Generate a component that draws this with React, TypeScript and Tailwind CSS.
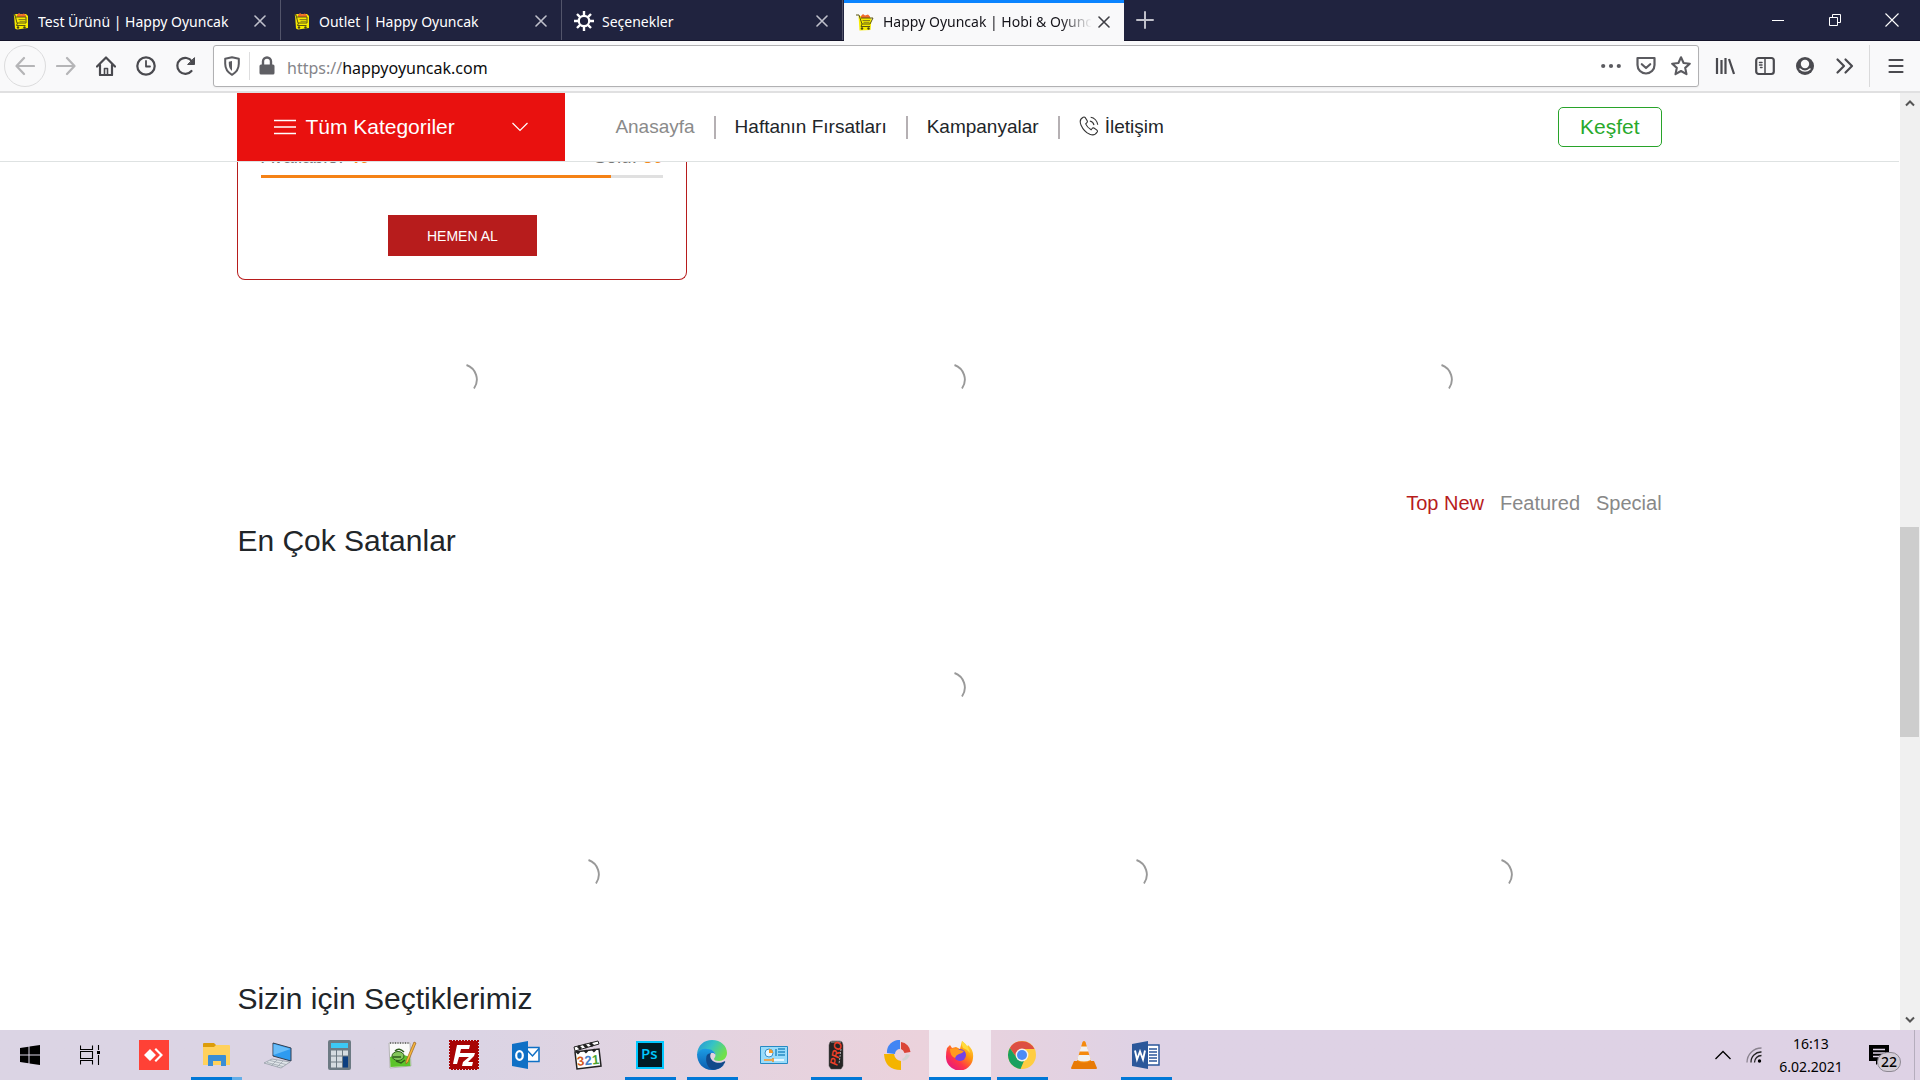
import React, { useState } from 'react';

const ui = "font-['Noto_Sans',sans-serif]";

function CartIcon({ flat = false }: { flat?: boolean }) {
  return (
    <svg viewBox="0 0 18 18" className="h-[18px] w-[18px] shrink-0">
      <path d={flat ? 'M2.500 3h10l3 3-1 11-11 .500z' : 'M2 3l2-1h10l2 2v12l-11 1.500-2-1z'} fill="#f7ec00" />
      <path d="M5 3l2-2 2 1.500 3-1 2 2v1.500H5z" fill="#ef6a2a" />
      <path d={flat ? 'M0 2h3l3 9h8l3-6H5M6 11l-1 2.500h9' : 'M1 3h2l2 8h9V5H4M5.500 11l-1 2.500h9'} fill="none" stroke="#5b5512" strokeWidth="1" />
      <path d="M6.500 7.500H14M7.500 9.300h6" fill="none" stroke="#7d751b" strokeWidth=".900" />
      <circle cx="6" cy="15.500" r="1.200" fill="#4a4515" />
      <circle cx="12.500" cy="15.500" r="1.200" fill="#4a4515" />
    </svg>
  );
}

function GearIcon() {
  return (
    <svg viewBox="0 0 20 20" className="h-5 w-5 shrink-0" fill="none" stroke="#fff">
      <circle cx="10" cy="10" r="5.200" strokeWidth="2.200" />
      <path d="M10 4.500V0M10 15.500V20M4.500 10H0M15.500 10H20M6.100 6.100L3 3M13.900 13.900L17 17M13.900 6.100L17 3M6.100 13.900L3 17" strokeWidth="2.400" />
    </svg>
  );
}

function Cross({ className }: { className: string }) {
  return (
    <svg viewBox="0 0 12 12" className={className} fill="none" stroke="currentColor" strokeWidth="1.600" strokeLinecap="round">
      <path d="M1 1l10 10M11 1L1 11" />
    </svg>
  );
}

const tabs = [
  { title: 'Test Ürünü | Happy Oyuncak', icon: <CartIcon /> },
  { title: 'Outlet | Happy Oyuncak', icon: <CartIcon /> },
  { title: 'Seçenekler', icon: <GearIcon /> },
  { title: 'Happy Oyuncak | Hobi & Oyuncak', icon: <CartIcon flat /> },
];

function TabBar() {
  return (
    <div className="flex h-[41px] shrink-0 border-b border-[#14142a] bg-[#20233f] text-white">
      {tabs.map((t, i) => {
        const active = i === 3;
        return (
          <div
            key={t.title}
            className={
              active
                ? '-mb-px ml-px flex w-[280px] items-center border-t-[3px] border-[#0a84ff] bg-[#f9f9fa] pr-3.5 pb-px pl-3'
                : 'flex w-[281px] items-center border-r border-[#52546a] pt-0.5 pr-3.5 pl-3'
            }
          >
            <button className={active ? 'flex min-w-0 flex-1 items-center gap-[9px] text-left text-[#15141a]' : 'flex min-w-0 flex-1 items-center gap-2 text-left'}>
              {t.icon}
              <span
                className={
                  active
                    ? 'flex-1 overflow-hidden mask-r-from-85% text-[14px] whitespace-nowrap'
                    : 'flex-1 overflow-hidden text-[14px] whitespace-nowrap'
                }
              >
                {t.title}
              </span>
            </button>
            <button aria-label="Sekmeyi kapat" className={active ? 'ml-1.5 text-[#3f3f45]' : 'ml-2 text-[#bfc0cb]'}>
              <Cross className="h-3 w-3" />
            </button>
          </div>
        );
      })}
      <button aria-label="Yeni sekme" className="ml-3 flex items-center text-[#c0c0ca]">
        <svg viewBox="0 0 18 18" className="h-[18px] w-[18px]" fill="none" stroke="currentColor" strokeWidth="2" strokeLinecap="round">
          <path d="M9 1v16M1 9h16" />
        </svg>
      </button>
      <div className="ml-auto flex">
        <button aria-label="Simge durumuna küçült" className="flex w-[57px] items-center justify-center">
          <span className="h-px w-3 bg-white" />
        </button>
        <button aria-label="Önceki boyut" className="flex w-[57px] items-center justify-center">
          <svg viewBox="0 0 12 12" className="h-3 w-3" fill="none" stroke="#fff">
            <path d="M.500 3.500h8v8h-8zM3.500 3.500v-3h8v8h-3" />
          </svg>
        </button>
        <button aria-label="Kapat" className="flex w-[57px] items-center justify-center">
          <svg viewBox="0 0 14 14" className="h-3.5 w-3.5" fill="none" stroke="#fff" strokeWidth="1.100">
            <path d="M.500.500l13 13M13.500.500l-13 13" />
          </svg>
        </button>
      </div>
    </div>
  );
}

function NavIcon({ label, children, className = '' }: { label: string; children: React.ReactNode; className?: string }) {
  return (
    <button aria-label={label} className={`flex h-10 w-10 shrink-0 items-center justify-center ${className}`}>
      <svg viewBox="0 0 20 20" className="h-5 w-5" fill="none" stroke="currentColor" strokeWidth="2.200" strokeLinecap="round" strokeLinejoin="round">
        {children}
      </svg>
    </button>
  );
}

function Toolbar() {
  const [url, setUrl] = useState('happyoyuncak.com');
  return (
    <div className="flex h-[52px] shrink-0 items-center border-b-2 border-[#e0e0e1] bg-[#f9f9fa] text-[#4a4a4f]">
      <button aria-label="Geri" className="ml-1 flex h-[42px] w-[42px] shrink-0 items-center justify-center rounded-full border border-[#dcdcdd] text-[#b5b5b7]">
        <svg viewBox="0 0 20 20" className="h-5 w-5" fill="none" stroke="currentColor" strokeWidth="2.200" strokeLinecap="round" strokeLinejoin="round">
          <path d="M19 10H2M9 2L1.500 10 9 18" />
        </svg>
      </button>
      <NavIcon label="İleri" className="text-[#b5b5b7]">
        <path d="M1 10h17M11 2l7.500 8L11 18" />
      </NavIcon>
      <NavIcon label="Ana sayfa">
        <path d="M1 10.500L10 1.500l9 9M4 9v10h12V9" />
        <path d="M8.500 18.500v-6h3v6" strokeWidth="1.600" />
      </NavIcon>
      <NavIcon label="Geçmiş">
        <circle cx="10" cy="10" r="8.700" />
        <path d="M10 5v5.500h4" strokeWidth="1.800" />
      </NavIcon>
      <NavIcon label="Yenile">
        <path d="M15.500 15A8 8 0 1 1 16 5.500" />
        <path d="M18.500 2v6.500H12z" fill="currentColor" strokeWidth="1" />
      </NavIcon>
      <div className="ml-[7px] flex h-[42px] min-w-0 flex-1 items-center rounded-[3px] border border-[#b1b1b3] bg-white shadow-xs">
        <button aria-label="İzleme koruması" className="flex w-9 justify-center border-r border-[#dededf] py-1">
          <svg viewBox="0 0 18 20" className="h-5 w-[18px]" fill="none" stroke="#5b5b60" strokeWidth="2">
            <path d="M9 1.200l6.800 1.600v5c0 5-2.300 8.500-6.800 11-4.500-2.500-6.800-6-6.800-11v-5z" strokeLinejoin="round" />
            <path d="M9 5v10c-2-1.700-3.200-4-3.200-7V5.700z" fill="#5b5b60" stroke="none" />
          </svg>
        </button>
        <button aria-label="Site bilgileri" className="ml-[9px]">
          <svg viewBox="0 0 16 20" className="h-5 w-4" fill="none">
            <path d="M4 9V5.500a4 4 0 0 1 8 0V9" stroke="#5f5f64" strokeWidth="2.400" />
            <rect x=".500" y="8.500" width="15" height="10" rx="1.500" fill="#5f5f64" />
          </svg>
        </button>
        <label className={`${ui} ml-3 flex min-w-0 flex-1 items-center pt-[3px] text-base text-[#0c0c0d]`}>
          <span className="text-[#85858a]">https://</span>
          <input aria-label="Adres" value={url} onChange={(e) => setUrl(e.target.value)} className="min-w-0 flex-1 bg-transparent outline-none" />
        </label>
        <div className="flex gap-[15px] pr-[7px] text-[#5b5b60]">
          <button aria-label="Sayfa eylemleri">
            <svg viewBox="0 0 20 20" className="h-5 w-5" fill="currentColor">
              <circle cx="2.200" cy="10" r="2.100" /><circle cx="10" cy="10" r="2.100" /><circle cx="17.800" cy="10" r="2.100" />
            </svg>
          </button>
          <button aria-label="Pocket'a kaydet">
            <svg viewBox="0 0 20 20" className="h-5 w-5" fill="none" stroke="currentColor" strokeWidth="2.200" strokeLinecap="round" strokeLinejoin="round">
              <path d="M1.500 2h17v7a8.500 8.500 0 0 1-17 0z" />
              <path d="M5.800 8.200L10 12l4.200-3.800" />
            </svg>
          </button>
          <button aria-label="Yer imlerine ekle">
            <svg viewBox="0 0 20 20" className="h-5 w-5" fill="none" stroke="currentColor" strokeWidth="2.100" strokeLinejoin="round">
              <path d="M10 1.300l2.600 5.700 6.200.700-4.600 4.200 1.300 6.300L10 15l-5.500 3.200 1.300-6.300L1.200 7.700 7.400 7z" />
            </svg>
          </button>
        </div>
      </div>
      <div className="ml-1.5 flex">
        <NavIcon label="Kütüphane">
          <path d="M2 2v16M6.500 4v14M10.500 2v16M14 3l5 15" strokeLinecap="butt" />
        </NavIcon>
        <NavIcon label="Kenar çubuğu">
          <rect x="1.200" y="2" width="17.600" height="16" rx="2.500" />
          <path d="M10 2v16M4.500 6.500h2.500M4.500 9h2.500M5.500 11.500H7" strokeWidth="1.500" />
        </NavIcon>
        <NavIcon label="Hesap">
          <circle cx="10" cy="10" r="9" fill="currentColor" stroke="none" />
          <circle cx="10" cy="8" r="4.200" fill="#f9f9fa" stroke="none" />
          <path d="M5 13c3 2.700 7 2.700 10 0" stroke="#f9f9fa" strokeWidth="1.500" />
        </NavIcon>
        <NavIcon label="Diğer araçlar">
          <path d="M2.500 3.500L9 10l-6.500 6.500M10.500 3.500L17 10l-6.500 6.500" />
        </NavIcon>
      </div>
      <span className="ml-1 h-[42px] w-px bg-[#dadadb]" />
      <NavIcon label="Menü" className="mr-1 ml-1.5">
        <path d="M3.500 4h13M3.500 10h13M3.500 16h13" />
      </NavIcon>
    </div>
  );
}

function Spinner() {
  return (
    <svg role="img" aria-label="Yükleniyor" viewBox="0 0 32 32" className="h-8 w-8" fill="none" stroke="#999" strokeWidth="1.900">
      <path d="M20.500 1A15.500 15.500 0 0 1 28 24.500" />
    </svg>
  );
}

const Divider = () => <span className="mx-[19px] h-[23px] w-0.5 bg-[#b5b0b3]" />;

function SiteHeader() {
  return (
    <header className="h-[69px] shrink-0 border-b border-[#dee2e2] bg-white">
      <div className="mx-auto flex h-full w-3/4 items-center">
        <button className="flex h-full w-[328px] items-center bg-[#e9110f] px-9 text-[21px] text-white">
          <svg viewBox="0 0 24 20" className="mr-2 h-5 w-6" stroke="#fff" strokeWidth="1.400">
            <path d="M1 3.500h22M1 10h22M1 16.500h22" />
          </svg>
          Tüm Kategoriler
          <svg viewBox="0 0 18 18" className="ml-auto h-[18px] w-[18px]" fill="none" stroke="#fff" strokeWidth="1.200">
            <path d="M1.500 5L9 12.500 16.500 5" />
          </svg>
        </button>
        <nav className="ml-[50px] flex items-center pt-px text-[19px] text-[#212529]">
          <a href="#anasayfa" className="text-[#8a8a8a]">Anasayfa</a>
          <Divider />
          <a href="#firsatlar">Haftanın Fırsatları</a>
          <Divider />
          <a href="#kampanyalar">Kampanyalar</a>
          <Divider />
          <a href="#iletisim" className="flex items-center gap-1.5">
            <svg viewBox="0 0 24 24" className="mb-1 h-5 w-5" fill="none" stroke="#333" strokeWidth="1.300">
              <path d="M5 1.500c-4 2-4.500 5-2.500 9.500 2.500 5.500 6 9 10.500 11 4 1.500 7 .500 9-3 .500-1 0-1.500-.500-2l-3.500-2.500c-1-.500-1.700-.300-2.300.500l-1.200 1.500C11 14.500 9 12 8 9.500l1.500-1.500c.700-.700.800-1.300.300-2.300L7.500 2c-.700-1-1.500-1-2.500-.500z" />
              <path d="M13 6c2.500.500 4.500 2.500 5 5M14 1.500c4.500.500 8 4.500 8.500 9" />
            </svg>
            İletişim
          </a>
        </nav>
        <button className="ml-auto h-10 rounded-[5px] border border-[#28a32a] px-[21px] text-[21px] text-[#28a92b]">Keşfet</button>
      </div>
    </header>
  );
}

function Page() {
  return (
    <div className="min-w-0 flex-1 overflow-hidden font-['Liberation_Sans',Arial,sans-serif] text-[#212529]">
      <SiteHeader />
      <main className="mx-auto w-3/4">
        <section className="w-[450px] overflow-hidden rounded-b-lg border border-t-0 border-[#b71c1c] px-[23px] pb-[23px]">
          <div className="-mt-[17px] flex justify-between text-[19px] leading-6 text-[#777]">
            <span>Available: <b className="text-[#f58a1c]">40</b></span>
            <span>Sold: <b className="text-[#f58a1c]">60</b></span>
          </div>
          <div className="mt-1.5 h-[3px] bg-[#e0e0e0]">
            <div className="h-full w-[87%] bg-[#f58216]" />
          </div>
          <button className="mx-auto mt-[37px] block h-[41px] w-[149px] bg-[#b71c1c] pt-px text-[14px] text-white">HEMEN AL</button>
        </section>
        <section className="mt-[84px] grid grid-cols-3 justify-items-center gap-x-[39px]">
          <Spinner />
          <Spinner />
          <Spinner />
        </section>
        <section className="mt-[93px]">
          <div className="flex justify-end gap-4 text-xl leading-7 text-[#888]">
            <button className="text-[#b71c1c]">Top New</button>
            <button>Featured</button>
            <button>Special</button>
          </div>
          <h2 className="mt-1 text-[30px] leading-10">En Çok Satanlar</h2>
          <div className="mt-[111px] flex justify-center">
            <Spinner />
          </div>
          <div className="-mx-[18px] mt-[155px] grid grid-cols-4 justify-items-center">
            <div className="col-span-2"><Spinner /></div>
            <Spinner />
            <Spinner />
          </div>
        </section>
        <section className="mt-[88px]">
          <h2 className="text-[30px] leading-10">Sizin için Seçtiklerimiz</h2>
        </section>
      </main>
    </div>
  );
}

function Scrollbar() {
  return (
    <div className="flex w-[21px] shrink-0 flex-col items-center border-l border-white bg-[#f0f0f0] pr-px">
      <svg viewBox="0 0 10 8" className="mt-1.5 h-2 w-2.5" fill="none" stroke="#555" strokeWidth="2"><path d="M1 6.500l4-4 4 4" /></svg>
      <div className="grow-[420]" />
      <div className="w-full grow-[210] bg-[#cdcdcd]" />
      <div className="grow-[279]" />
      <svg viewBox="0 0 10 8" className="mb-1.5 h-2 w-2.5" fill="none" stroke="#555" strokeWidth="2"><path d="M1 1.500l4 4 4-4" /></svg>
    </div>
  );
}

const box = 'h-[30px] w-[30px]';

const AnyDesk = () => (
  <svg viewBox="0 0 30 30" className={box}>
    <path d="M0 0h30v30H0z" fill="#ff4136" />
    <path d="M11 9l6 6-6 6-6-6zM15.500 9.500L17 8l7 7-7 7-1.500-1.500L21 15z" fill="#fff" />
  </svg>
);
const Explorer = () => (
  <svg viewBox="0 0 30 30" className={box}>
    <path d="M2 4q0-1 1-1h10l2 2v4H2z" fill="#dc9c0a" />
    <path d="M2 7h11l2-2h13q1 0 1 1v19H2z" fill="#ffd15c" />
    <path d="M7 26V16q0-1 1-1h16q1 0 1 1v10h-5v-5h-8v5z" fill="#3a8ed6" />
  </svg>
);
const Remote = () => (
  <svg viewBox="0 0 30 30" className={box}>
    <path d="M10 3l18 5v13L10 16z" fill="#2e9bf0" stroke="#333f50" />
    <path d="M10.500 4l17 5-17 6z" fill="#68bdf9" />
    <path d="M1 23l8-4 18 3-9 6z" fill="#dfe4e8" stroke="#8b949d" strokeWidth=".700" />
    <path d="M4 22.500l16 4M7 20.500l16 4M8 26l6-6M14 27l6-6" stroke="#9da6ae" strokeWidth=".800" />
  </svg>
);
const Calculator = () => (
  <svg viewBox="0 0 30 30" className={box}>
    <rect x="3" width="23" height="30" rx="2" fill="#6c7a83" />
    <path d="M6 3h17v5H6z" fill="#3cc8f4" />
    <path d="M6 10.500h5v5H6zM12 10.500h5v5h-5zM18 10.500h5v5h-5zM6 16.500h5v5H6zM12 16.500h5v5h-5zM6 22.500h5v5H6zM12 22.500h5v5h-5z" fill="#d5dce0" />
    <path d="M18 16.500h5v11h-5z" fill="#0c3f80" />
  </svg>
);
const NotepadPP = () => (
  <svg viewBox="0 0 30 30" className={box}>
    <path d="M2 3h21l1 23-21 2z" fill="#fafafa" stroke="#b5b5b5" />
    <path d="M3 17q9-5 20 0l.500 9-20 1z" fill="#5cc42a" />
    <path d="M3 3h20" stroke="#777" strokeWidth="2" strokeDasharray="1 1.500" />
    <ellipse cx="11" cy="16" rx="6" ry="4.500" fill="#83c55b" stroke="#2d5c1b" />
    <path d="M8 11q4-4 9 1M9 21l5 2 4-3M6 17h8" fill="none" stroke="#2d5c1b" strokeWidth="1.500" />
    <path d="M27 2l2 1-8 19-2 2v-3z" fill="#f7b63b" stroke="#9a6320" strokeWidth=".700" />
  </svg>
);
const FileZilla = () => (
  <svg viewBox="0 0 30 30" className={box}>
    <path d="M1 1h28v28H1z" fill="#a80404" stroke="#a80404" strokeWidth="2" strokeDasharray="2 1" />
    <path d="M8 5h13l-1 4h-8l-1 4h7l-1 4h-7l-2 7H4z" fill="#fff" />
    <path d="M16 13h10l-1 3-6 6h5l-1 4H13l1-4 6-5h-5z" fill="#fff" />
  </svg>
);
const Outlook = () => (
  <svg viewBox="0 0 30 30" className={box}>
    <path d="M15 7.500h13v14H15z" fill="#fff" stroke="#0f70c5" strokeWidth="1.500" />
    <path d="M15 9l6.500 7L28 8.500" fill="none" stroke="#0f70c5" strokeWidth="1.500" />
    <path d="M1 4l16-3v28L1 26z" fill="#0f70c5" />
    <ellipse cx="8.500" cy="15.500" rx="3.300" ry="4.300" fill="none" stroke="#fff" strokeWidth="2.200" />
  </svg>
);
const MediaPlayer = () => (
  <svg viewBox="0 0 30 30" className={box}>
    <path d="M2 12l24-3 2 17-24 3z" fill="#fff" stroke="#222" strokeWidth="1.500" />
    <path d="M1 7L25 1l1 3-24 7z" fill="#fff" stroke="#222" />
    <path d="M5 6l3 3M11 4.500l3 3M17 3l3 3M4 11.500l2 2M12 10.500l2 2M20 9.500l2 2" stroke="#222" strokeWidth="3" />
    <g fontFamily="Liberation Sans" fontSize="13" fontWeight="700" transform="rotate(-6 15 20)">
      <text x="4" y="25" fill="#d3591d">3</text><text x="11.500" y="25" fill="#4381c9">2</text><text x="19" y="25" fill="#4aa52e">1</text>
    </g>
  </svg>
);
const Photoshop = () => (
  <svg viewBox="0 0 30 30" className={box}>
    <path d="M2 2h26v26H2z" fill="#001d26" stroke="#00c8ff" strokeWidth="2" />
    <text x="6" y="19" fontFamily="Open Sans" fontSize="15" fontWeight="600" fill="#00c8ff">Ps</text>
  </svg>
);
const Edge = () => (
  <svg viewBox="0 0 30 30" className={box}>
    <defs>
      <linearGradient id="edgeTop" x1="0" y1="0" x2="1" y2=".500">
        <stop offset="0" stopColor="#2591d8" /><stop offset=".500" stopColor="#36c3c5" /><stop offset="1" stopColor="#70e04a" />
      </linearGradient>
      <linearGradient id="edgeLow" x1="0" y1="0" x2="0" y2="1">
        <stop offset="0" stopColor="#1c9ce4" /><stop offset="1" stopColor="#0b5cae" />
      </linearGradient>
    </defs>
    <path d="M0 14C1 5 7 0 15 0c9 0 15 6 15 13 0 5-4 8-8 8-3 0-5-1-5-2s1.500-1.500 1.500-4c0-3-3-5-7-5C6 9 2 11 0 14z" fill="url(#edgeTop)" />
    <path d="M0 14c2-4 6-6 10-5 5 0 8.500 3 8.500 6-1-2-3-2.500-5-1.500-3 2-3 8 3 12 4 2 7 1 10.500-1-3 4-7 5.500-12 5.500C6 30 0 23 0 14z" fill="url(#edgeLow)" />
    <path d="M9.500 16c1-2 2.500-3 4.500-2.700-2 3 0 8 5 9.200 3 .700 6 .200 8-1 1-.500 1.500 0 1 1-3 5-7 7-12 7-5-1-8-7-6.500-13.500z" fill="#114a8b" />
  </svg>
);
const ControlPanel = () => (
  <svg viewBox="0 0 30 30" className={box}>
    <path d="M1.500 6.500h27v17h-27z" fill="#9bdcfa" stroke="#278ac4" />
    <circle cx="10" cy="13" r="4" fill="#e8f7ff" stroke="#388fca" />
    <path d="M10 13V9a4 4 0 0 1 4 4z" fill="#f39a2b" />
    <path d="M19 9h7M19 12h7M19 15h7M17 9v7" stroke="#278ac4" strokeWidth="1.500" />
    <path d="M5 20h20" stroke="#fff" strokeWidth="1.500" /><path d="M5 20h8M14 18v4" stroke="#eb8c1c" strokeWidth="1.500" />
  </svg>
);
const ProCan = () => (
  <svg viewBox="0 0 30 30" className={box}>
    <path d="M9 2l2-1h8l2 1 1 3v21l-2 3H10l-2-3V5z" fill="#252525" stroke="#555" strokeWidth=".500" />
    <path d="M10 2h10" stroke="#aaa" />
    <text fontFamily="Liberation Sans" fontSize="11" fontWeight="700" fontStyle="italic" fill="#f04028" transform="translate(16 26) rotate(-78)">PRO</text>
    <path d="M20 9l-2 15" stroke="#a9a9a9" strokeDasharray="2 1" />
  </svg>
);
const Ring = () => (
  <svg viewBox="0 0 30 30" className={box} fill="none">
    <path d="M4 13A12 12 0 0 1 17 0v9a5 5 0 0 0-5 5z" fill="#4285f4" />
    <path d="M18 2a11 11 0 0 1 9.500 10l-6 1q-1-3-3.500-4z" fill="#db4437" />
    <path d="M1 14h10q1 6 7 7v9Q2 30 1 14z" fill="#f4b400" />
    <path d="M19 19q3-1 4-5l4 1q-2 5-7 6z" fill="#d2d2d2" />
  </svg>
);
const Firefox = () => (
  <svg viewBox="0 0 30 30" className={box}>
    <defs>
      <linearGradient id="fox" x1="1" y1="0" x2=".200" y2="1">
        <stop offset="0" stopColor="#fff44f" /><stop offset=".400" stopColor="#ff980e" /><stop offset=".700" stopColor="#ff3647" /><stop offset="1" stopColor="#e31587" />
      </linearGradient>
    </defs>
    <path d="M2 8l3-3 2 3 4-1 4 2 2-8q3 2 5 6l1-2q6 5 5 13A13.500 13.500 0 0 1 1 16q0-4 1-8z" fill="url(#fox)" />
    <circle cx="15" cy="15" r="6" fill="#7542e5" />
    <path d="M5 9q5-2 10 1l4 1q-2 3-5 3-3 1-4 4-5-2-5-9z" fill="#ff9a1f" />
    <path d="M17 1q7 5 8 12-3-4-7-5-2-3-1-7z" fill="#ffdb3c" />
  </svg>
);
const Chrome = () => (
  <svg viewBox="0 0 30 30" className={box}>
    <circle cx="15" cy="15" r="14" fill="#ffcd41" />
    <path d="M2.900 8A14 14 0 0 1 27.500 9H15a6 6 0 0 0-5.200 9z" fill="#dd4f43" />
    <path d="M2.900 8l6.900 10a6 6 0 0 0 7.200 2.700L13.500 29A14 14 0 0 1 2.900 8z" fill="#1aa15f" />
    <circle cx="15" cy="15" r="6.400" fill="#f1f1f1" /><circle cx="15" cy="15" r="5" fill="#4c8bf5" />
  </svg>
);
const Vlc = () => (
  <svg viewBox="0 0 30 30" className={box}>
    <path d="M5 21h20l3 7q0 1-1 1H3q-1 0-1-1z" fill="#e87a06" />
    <path d="M13.500 2q1.500-2 3 0L22 21q-7 4-14 0z" fill="#f58a0b" />
    <path d="M12 6.500h6l1.500 5h-9zM9.500 15h11l1.300 5q-7 3-13.600 0z" fill="#f1f1f1" />
  </svg>
);
const Word = () => (
  <svg viewBox="0 0 30 30" className={box}>
    <path d="M15 5h13v20H15z" fill="#fff" stroke="#2b579a" strokeWidth="1.500" />
    <path d="M18 9h8M18 12h8M18 15h8M18 18h8M18 21h8" stroke="#2b579a" strokeWidth="1.500" />
    <path d="M1 4l16-3v28L1 26z" fill="#2b579a" />
    <path d="M4 10.500l2 9 3-8 3 8 2-9" fill="none" stroke="#fff" strokeWidth="1.900" />
  </svg>
);

type App = { name: string; icon: React.ReactNode; state?: 'open' | 'active' | 'many' };

const apps: App[] = [
  { name: 'AnyDesk', icon: <AnyDesk /> },
  { name: 'Dosya Gezgini', icon: <Explorer />, state: 'many' },
  { name: 'Bilgisayar', icon: <Remote /> },
  { name: 'Hesap Makinesi', icon: <Calculator /> },
  { name: 'Notepad++', icon: <NotepadPP /> },
  { name: 'FileZilla', icon: <FileZilla /> },
  { name: 'Outlook', icon: <Outlook /> },
  { name: 'Media Player Classic', icon: <MediaPlayer /> },
  { name: 'Photoshop', icon: <Photoshop />, state: 'open' },
  { name: 'Edge', icon: <Edge />, state: 'open' },
  { name: 'Denetim Masası', icon: <ControlPanel /> },
  { name: 'Pro', icon: <ProCan />, state: 'open' },
  { name: 'Web Designer', icon: <Ring /> },
  { name: 'Firefox', icon: <Firefox />, state: 'active' },
  { name: 'Chrome', icon: <Chrome />, state: 'open' },
  { name: 'VLC', icon: <Vlc /> },
  { name: 'Word', icon: <Word />, state: 'open' },
];

function TaskButton({ app }: { app: App }) {
  const active = app.state === 'active';
  return (
    <button
      aria-label={app.name}
      className={active ? 'flex w-[62px] flex-col items-center bg-[#f4eef4]' : 'flex w-[62px] flex-col items-center'}
    >
      <span className="flex flex-1 items-center pt-[3px]">{app.icon}</span>
      {app.state === 'many' ? (
        <span className="flex h-[3px] w-[51px] bg-[#0078d7]">
          <span className="ml-auto w-2.5 bg-[#63aee8]" />
        </span>
      ) : (
        <span className={active ? 'h-[3px] w-full bg-[#0078d7]' : app.state ? 'h-[3px] w-[51px] bg-[#0078d7]' : 'h-[3px]'} />
      )}
    </button>
  );
}

function Taskbar() {
  return (
    <footer className="flex h-[50px] shrink-0 bg-linear-to-r from-[#dbd4e4] from-25% via-[#ebd2dc] via-48% to-[#ded2e5] to-60%">
      <button aria-label="Başlat" className="flex w-[60px] items-center justify-center">
        <svg viewBox="0 0 20 20" className="h-5 w-5"><path d="M0 3l8.500-1.200v7.700H0zM9.500 1.500L20 0v9.500H9.500zM0 10.500h8.500v7.700L0 17zM9.500 10.500H20V20L9.500 18.500z" /></svg>
      </button>
      <button aria-label="Görev görünümü" className="flex w-[63px] items-center justify-center pr-1">
        <svg viewBox="0 0 20 20" className="h-5 w-5" fill="none" stroke="#000" strokeWidth="1.100">
          <path d="M.500.500v4h12v-4M.500 19.500v-4h12v4M.500 6.500h12v7H.500zM18.500 0v5M18.500 10v10" />
          <path d="M17 6h3v3h-3z" fill="#000" stroke="none" />
        </svg>
      </button>
      {apps.map((a) => <TaskButton key={a.name} app={a} />)}
      <div className={`${ui} ml-auto flex items-center text-black`}>
        <button aria-label="Gizli simgeler">
          <svg viewBox="0 0 16 10" className="h-2.5 w-4" fill="none" stroke="#000" strokeWidth="1.300"><path d="M.500 9L8 1.500 15.500 9" /></svg>
        </button>
        <svg role="img" aria-label="Ağ" viewBox="0 0 16 16" className="ml-[15px] h-4 w-4" fill="none" stroke="#222" strokeWidth="1.300">
          <path d="M5 15.500A10 10 0 0 1 15.500 5M8.500 15.500a7 7 0 0 1 7-7" />
          <path d="M1 15.500A14.500 14.500 0 0 1 15.500 1" stroke="#8a838f" />
          <circle cx="13.500" cy="14" r="1.700" fill="#000" stroke="none" />
        </svg>
        <div className="w-[98px] text-center text-[14px] leading-[23px]">
          <div>16:13</div>
          <div>6.02.2021</div>
        </div>
        <button aria-label="Bildirimler" className="relative ml-[9px] h-[30px] w-8">
          <svg viewBox="0 0 20 20" className="h-5 w-5">
            <path d="M0 0h20v16h-9l-4 4v-4H0z" />
            <path d="M4 4.500h12M4 8h12M4 11.500h9" stroke="#ded2e5" strokeWidth="1.300" />
          </svg>
          <span className="absolute right-0 -bottom-0.5 h-5 w-6 rounded-full border border-[#8d8892] bg-[#d3ccd6] text-center text-[14px] leading-[18px] font-medium">22</span>
        </button>
        <span className="ml-[13px] h-full w-px bg-[#b5adbd]" />
        <span className="w-[5px]" />
      </div>
    </footer>
  );
}

export default function App() {
  return (
    <div className="flex h-screen flex-col overflow-hidden bg-white">
      <div className={ui}><TabBar /></div>
      <Toolbar />
      <div className="flex min-h-0 flex-1">
        <Page />
        <Scrollbar />
      </div>
      <Taskbar />
    </div>
  );
}
